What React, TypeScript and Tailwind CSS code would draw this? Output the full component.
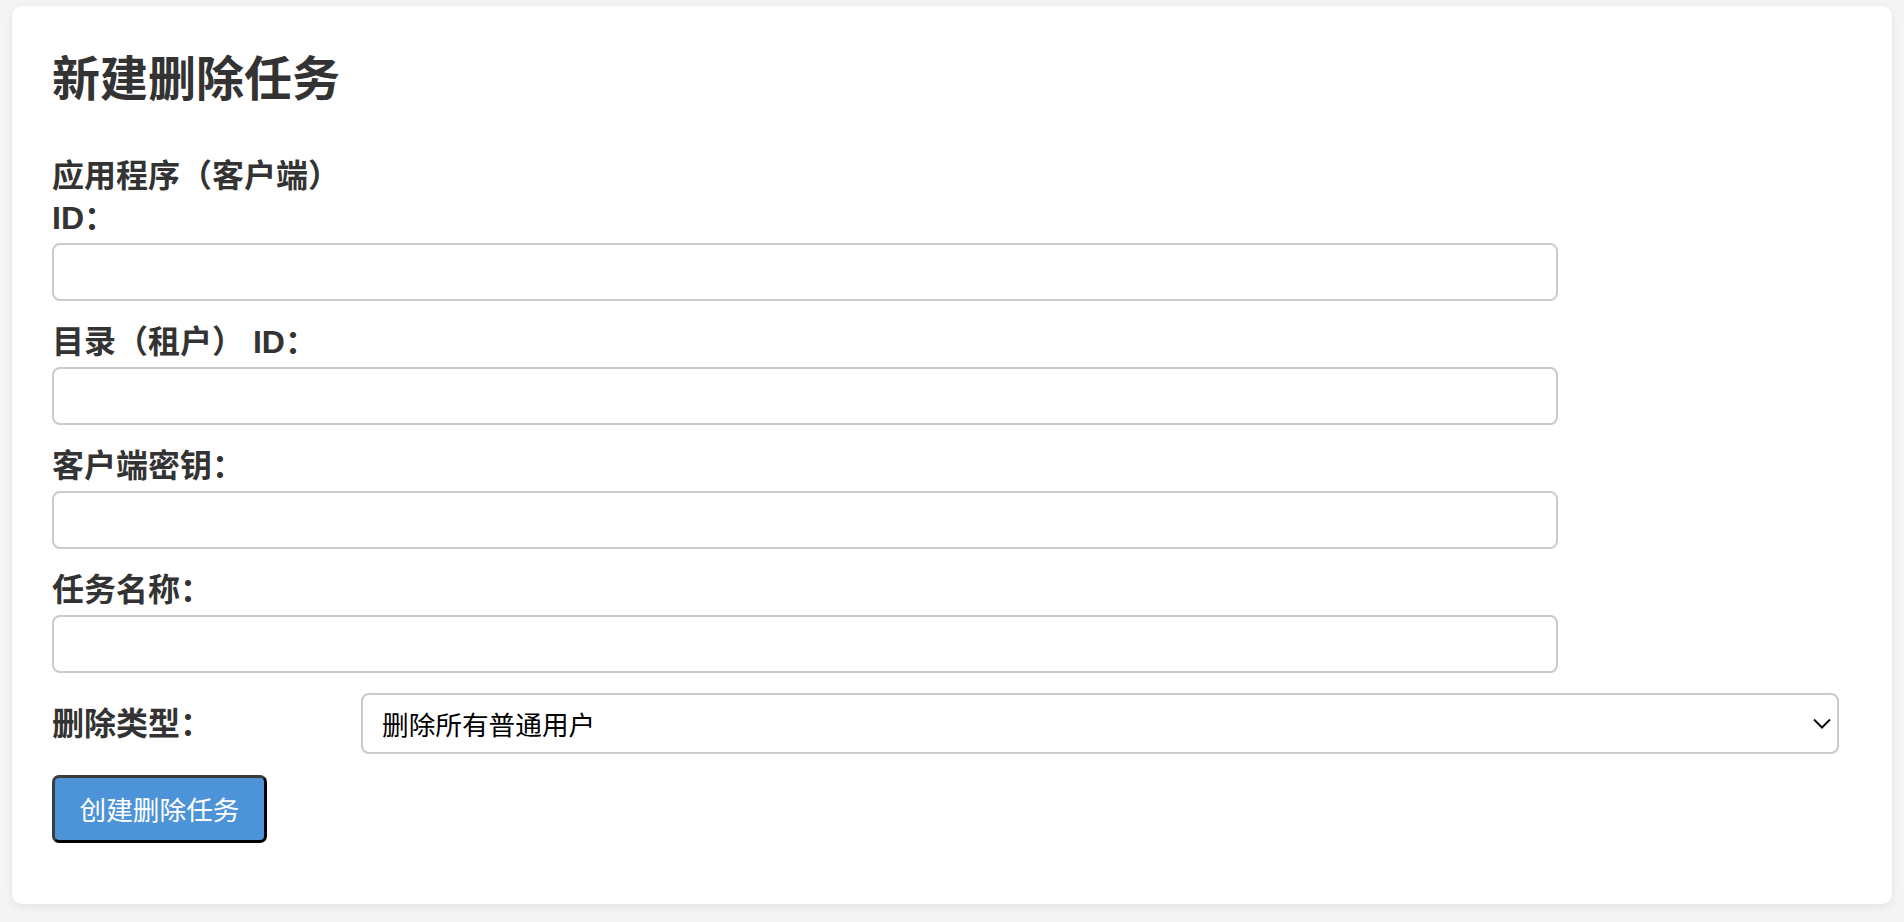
const LABEL =
  "block w-[300px] text-[32px] font-bold leading-[42px] text-[#333] mb-[4px]";
const INPUT =
  "block w-[1506px] h-[58px] rounded-[8px] border-2 border-[#cbcbcb] bg-white mb-[20px] outline-none";

const FIELDS = ["应用程序（客户端） ID：", "目录（租户） ID：", "客户端密钥：", "任务名称："];

export default function App() {
  return (
    <div
      className="min-h-screen bg-[#f4f4f4] px-[12px] pt-[6px] pb-[6px]"
      style={{ fontFamily: '"Liberation Sans", "Noto Sans CJK SC", sans-serif' }}
    >
      <div className="rounded-[10px] bg-white px-[40px] pt-[40px] pb-[61px] shadow-[0_2px_8px_rgba(0,0,0,0.08)]">
        <h2 className="mt-[5px] mb-[46px] text-[48px] font-bold leading-[58px] text-[#333]">
          新建删除任务
        </h2>

        {FIELDS.map((f) => (
          <div key={f}>
            <label className={LABEL}>{f}</label>
            <input type="text" className={INPUT} />
          </div>
        ))}

        <div className="flex items-center">
          <label className="w-[309px] text-[32px] font-bold leading-[42px] text-[#333]">
            删除类型：
          </label>
          <div className="relative">
            <select
              className="block h-[61px] w-[1478px] appearance-none rounded-[8px] border-2 border-[#cbcbcb] bg-white pl-[19px] text-[26.67px] text-black outline-none"
              style={{ fontFamily: '"Noto Sans CJK SC", sans-serif' }}
              defaultValue="all"
            >
              <option value="all">删除所有普通用户</option>
            </select>
            <svg
              className="pointer-events-none absolute right-[8px] top-[25px]"
              width="18"
              height="11"
              viewBox="0 0 18 11"
              fill="none"
            >
              <path d="M1 1.5 L9 9.5 L17 1.5" stroke="#111" strokeWidth="2" />
            </svg>
          </div>
        </div>

        <button
          type="button"
          className="mt-[21px] h-[68px] w-[215px] rounded-[7px] border-[3px] border-t-[#3c3c3c] border-l-[#3c3c3c] border-r-black border-b-black bg-[#4d93d8] text-[26.67px] text-white"
          style={{ fontFamily: '"Noto Sans CJK SC", sans-serif' }}
        >
          创建删除任务
        </button>
      </div>
    </div>
  );
}
